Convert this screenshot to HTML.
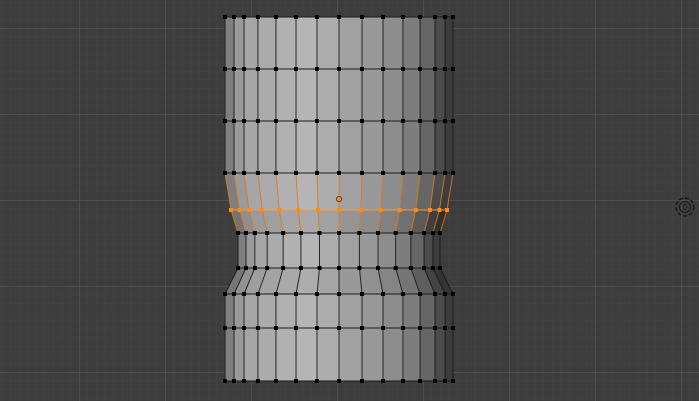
<!DOCTYPE html><html><head><style>html,body{margin:0;padding:0;background:#3d3d3d;width:699px;height:401px;overflow:hidden}</style></head><body>
<svg id="s" width="699" height="401" xmlns="http://www.w3.org/2000/svg">
<defs>
<pattern id="mg" width="8.6" height="8.6" patternUnits="userSpaceOnUse" x="79" y="28"><path d="M0 0H8.6M0 0V8.6" stroke="#444" stroke-width="1" fill="none"/></pattern>
</defs>
<rect width="699" height="401" fill="#3d3d3d"/>
<rect width="699" height="401" fill="url(#mg)"/>
<g stroke="#4e4e4e" stroke-width="1">
<path d="M79.5 0V401M165.5 0V401M251.5 0V401M337.5 0V401M423.5 0V401M509.5 0V401M595.5 0V401M681.5 0V401M0 28.5H699M0 114.5H699M0 200.5H699M0 286.5H699M0 372.5H699"/>
</g>
<g id="mesh"></g>
<g fill="none" stroke="#111" stroke-width="1.2">
<circle cx="685" cy="207" r="9" stroke-dasharray="4 2"/>
<circle cx="685" cy="207" r="5.5" stroke="#1a1a1a" stroke-width="1"/>
<path d="M685 204L687 207L685 210L683 207Z" stroke="#222" stroke-width="0.8"/>
</g>
</svg>
<script>
var f=[-1,-.921,-.833,-.711,-.553,-.377,-.193,0,.202,.386,.561,.711,.842,.93,1];
var col=["#7f7f7f","#9a9a9a","#a6a6a6","#ababab","#b1b1b1","#b5b5b5","#adadad","#a1a1a1","#999","#8d8d8d","#7d7d7d","#666","#4b4b4b","#3c3c3c"];
var rows=[[17,114],[69,114],[121,114],[173,114],[210,108],[233,101],[268,101],[294,114],[328,114],[381,114]];
var cx=339,h="";
function X(i,r){return cx+f[i]*r;}
function shade(c,d){var v=parseInt(c.slice(1,3),16)+d;v=Math.max(0,Math.min(255,v));var s=v.toString(16).padStart(2,'0');return '#'+s+s+s;}
for(var k=0;k<rows.length-1;k++){var a=rows[k],b=rows[k+1];
for(var i=0;i<14;i++){var c=col[i];if(k==4||k==6){c=shade(c,k==4?-12:-8);}
h+='<polygon fill="'+c+'" points="'+X(i,a[1])+','+a[0]+' '+X(i+1,a[1])+','+a[0]+' '+X(i+1,b[1])+','+b[0]+' '+X(i,b[1])+','+b[0]+'"/>';}}
for(var k=0;k<rows.length-1;k++){var a=rows[k],b=rows[k+1];
for(var i=0;i<15;i++){var st=(k==3||k==4)?'#e07a1a':'#1a1a1a';var op=(k==3||k==4)?0.85:0.9;
h+='<line x1="'+X(i,a[1])+'" y1="'+a[0]+'" x2="'+X(i,b[1])+'" y2="'+b[0]+'" stroke="'+st+'" stroke-opacity="'+op+'" stroke-width="1"/>';}}
for(var k=0;k<rows.length;k++){var r=rows[k];var st=k==4?'#ff9a3a':'#1a1a1a';
h+='<line x1="'+X(0,r[1])+'" y1="'+r[0]+'" x2="'+X(14,r[1])+'" y2="'+r[0]+'" stroke="'+st+'" stroke-width="1"/>';
for(var i=0;i<15;i++){h+='<rect x="'+(X(i,r[1])-2)+'" y="'+(r[0]-2)+'" width="4" height="4" fill="'+(k==4?'#ff8a10':'#000')+'"/>';}}
h+='<circle cx="339" cy="199" r="2.6" fill="#ff8a10" stroke="#333" stroke-width="0.8"/>';
document.getElementById('mesh').innerHTML=h;
</script>
</body></html>
